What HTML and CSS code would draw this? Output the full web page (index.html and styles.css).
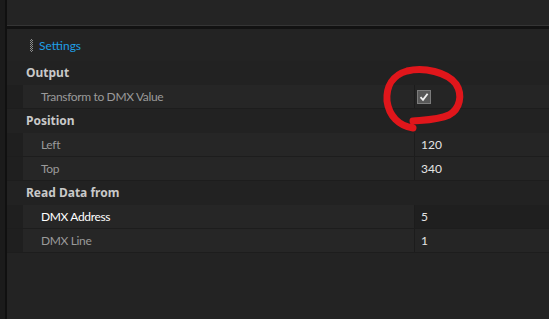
FILE: index.html
```html
<!DOCTYPE html>
<html lang="en">
<head>
  <meta charset="UTF-8">
  <title>Settings</title>
  <link rel="stylesheet" href="styles.css">
</head>
<body>
  <div class="app">
    <div class="sidebar"></div>
    <div class="main">
      <div class="toolbar"></div>
      <div class="panel">
        <div class="panel-title"><span class="grip"></span>Settings</div>
        <div class="grid">
          <div class="cat">Output</div>
          <div class="row">
            <div class="name">Transform to DMX Value</div>
            <div class="value">
              <span class="check">
                <svg width="10" height="10" viewBox="0 0 10 10"><path d="M1.5 5.2 L4 7.8 L8.6 1.8" fill="none" stroke="#f2f2f2" stroke-width="1.8"/></svg>
              </span>
            </div>
          </div>
          <div class="cat">Position</div>
          <div class="row">
            <div class="name">Left</div>
            <div class="value">120</div>
          </div>
          <div class="row">
            <div class="name">Top</div>
            <div class="value">340</div>
          </div>
          <div class="cat">Read Data from</div>
          <div class="row selected">
            <div class="name">DMX Address</div>
            <div class="value">5</div>
          </div>
          <div class="row">
            <div class="name">DMX Line</div>
            <div class="value">1</div>
          </div>
        </div>
      </div>
    </div>

    <!-- hand drawn marker around the checkbox -->
    <svg class="scribble" width="549" height="319" viewBox="0 0 549 319">
      <path d="M413 128 C399 126 389 116 387 101 C386 86 393 75 407 71 C424 67 447 72 456 84 C463 95 460 109 449 115 C438 120 424 120 413 121"
            fill="none" stroke="#e0161b" stroke-width="7" stroke-linecap="round" stroke-linejoin="round"/>
    </svg>
  </div>
</body>
</html>
```

FILE: styles.css
```css
body {
  margin: 0;
  background-color: #232323;
  font-family: Lato, "Noto Sans", sans-serif;
  font-size: 12px;
}
.app {
  position: relative;
  display: flex;
  width: 549px;
  height: 319px;
  overflow: hidden;
}
.sidebar {
  width: 5px;
  background: #1b1b1b;
  border-right: 2px solid #101010;
}
.main {
  flex: 1;
  display: flex;
  flex-direction: column;
}
.toolbar {
  height: 25px;
  background: #242424;
  border-bottom: 1px solid #353535;
}
.panel {
  flex: 1;
  background: #232323;
  border-top: 3px solid #121212;
}
.panel-title {
  display: flex;
  align-items: center;
  height: 32px;
  padding-left: 23px;
  color: #1f9fe6;
}
.grip {
  width: 3px;
  height: 13px;
  margin-right: 6px;
  background: conic-gradient(#8c8c8c 25%, transparent 0 50%, #8c8c8c 0 75%, transparent 0);
  background-size: 2px 2px;
}
.grid {
  display: flex;
  flex-direction: column;
}
.cat {
  height: 24px;
  line-height: 24px;
  padding-left: 19px;
  font-family: "Noto Sans", sans-serif;
  font-weight: bold;
  color: #c9c9c9;
  background: #222222;
}
.row {
  display: flex;
  height: 23px;
  line-height: 23px;
  border-bottom: 1px solid #1d1d1d;
  background: #1f1f1f;
}
.name {
  width: 373px;
  margin-left: 16px;
  padding-left: 18px;
  letter-spacing: -0.35px;
  color: #9a9a9a;
  background: #262626;
  border-right: 1px solid #1c1c1c;
}
.value {
  flex: 1;
  display: flex;
  align-items: center;
  padding-left: 6px;
  color: #e4e4e4;
  background: #252525;
}
.selected .name {
  color: #ffffff;
}
.selected .value {
  background: #1f1f1f;
}
.check {
  display: inline-flex;
  align-items: center;
  justify-content: center;
  width: 12px;
  height: 12px;
  margin-left: -4px;
  background: #585858;
  border: 1px solid #7c7c7c;
}
.scribble {
  position: absolute;
  left: 0;
  top: 0;
  pointer-events: none;
}
```
